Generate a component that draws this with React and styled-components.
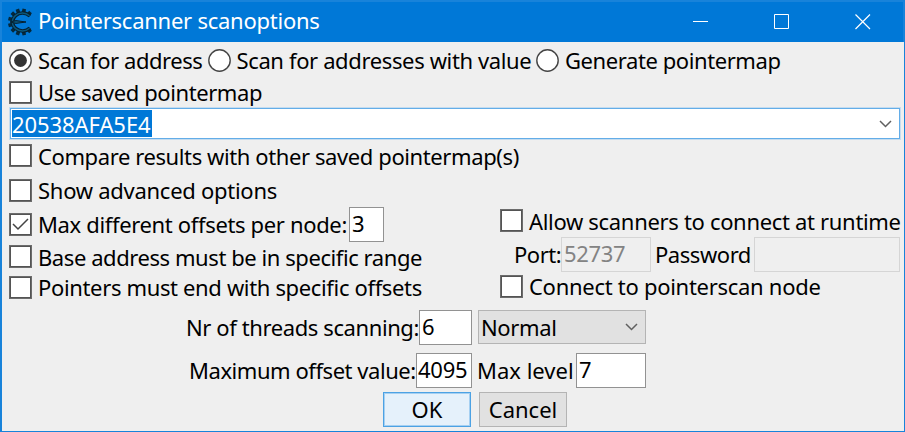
import React from "react";
import styled, { createGlobalStyle } from "styled-components";

const GlobalStyle = createGlobalStyle`
  * { box-sizing: border-box; }
  body { margin: 0; overflow: hidden; }
`;

const Window = styled.div`
  width: 905px;
  height: 432px;
  display: flex;
  flex-direction: column;
  border: solid #1883da;
  border-width: 2px 1px 1px 2px;
  background: #efefef;
  color: #000;
  font: 22px/23px "Noto Sans", sans-serif;
  white-space: nowrap;
`;

const TitleBar = styled.header`
  height: 40px;
  flex: none;
  display: flex;
  align-items: center;
  padding-left: 4px;
  background: #0078d7;
  border-right: 1px solid #1883da;
  color: #fff;
`;

const Title = styled.h1`
  flex: 1;
  margin: 0 0 0 4px;
  padding-bottom: 3px;
  font-size: 22px;
  font-weight: 400;
  letter-spacing: -0.25px;
`;

const CaptionButton = styled.button`
  width: 81px;
  height: 40px;
  padding: 0;
  border: 0;
  background: none;
  display: grid;
  place-items: center;
`;

const Client = styled.main`
  flex: 1;
  padding: 7px 0 0 7px;
`;

const Row = styled.div`
  display: flex;
  height: ${(p) => p.$h || 23}px;
  margin-top: ${(p) => p.$top || 0}px;
  margin-left: ${(p) => p.$left || 0}px;
`;

const Text = styled.span`
  width: ${(p) => (p.$w ? `${p.$w}px` : "auto")};
  flex: none;
  margin-top: ${(p) => p.$top || 0}px;
  padding-left: ${(p) => p.$pl || 0}px;
  letter-spacing: ${(p) => p.$ls || 0}px;
`;

const Option = styled.label`
  display: flex;
  height: 23px;
  width: ${(p) => (p.$w ? `${p.$w}px` : "auto")};
  margin-top: ${(p) => p.$top || 0}px;
  flex: none;
`;

const Box = styled.span`
  width: 23px;
  height: 23px;
  flex: none;
  margin-right: 6px;
  border: 1px solid #6c6c6c;
  box-shadow: inset 0 0 0 1px #545454;
  background: #fff;
  display: grid;
  place-items: center;
`;

const RadioMark = styled.svg`
  width: 24px;
  height: 24px;
  flex: none;
  margin-right: 5px;
`;

const Combo = styled.div`
  width: 892px;
  height: 33px;
  margin-top: 3px;
  padding: 2px 8px 2px 2px;
  display: flex;
  justify-content: space-between;
  align-items: center;
  background: #fff;
  border: 1px solid #c5dcef;
  box-shadow: inset 0 0 0 1px #63ade8;
`;

const Selection = styled.span`
  height: 27px;
  width: 140px;
  background: #0078d7;
  color: #fff;
  line-height: 28px;
  letter-spacing: -0.08px;
`;

const Columns = styled.div`
  display: grid;
  grid-template-columns: 491px 411px;
  margin-top: 5px;
`;

const Field = styled.span`
  width: ${(p) => p.$w}px;
  height: 35px;
  flex: none;
  padding: 4px 0 0 ${(p) => p.$pl ?? 2}px;
  border: 1px solid ${(p) => (p.$disabled ? "#d5d5d5" : "#929292")};
  background: ${(p) => (p.$disabled ? "#efefef" : "#fff")};
  color: ${(p) => (p.$disabled ? "#838383" : "#000")};
  letter-spacing: ${(p) => p.$ls || 0}px;
`;

const Select = styled.button`
  width: 168px;
  height: 34px;
  margin-left: 6px;
  padding: 0 7px 0 2px;
  display: flex;
  align-items: center;
  justify-content: space-between;
  border: 1px solid #b4b4b4;
  background: #e1e1e1;
  color: inherit;
  font: inherit;
  letter-spacing: -0.35px;
`;

const Button = styled.button`
  width: ${(p) => p.$w}px;
  height: 35px;
  padding: 0;
  border: ${(p) => (p.$primary ? "1px solid #4ca2e4" : "1px solid #b4b4b4")};
  box-shadow: ${(p) => (p.$primary ? "inset 0 0 0 1px #a5d0f2" : "none")};
  background: ${(p) => (p.$primary ? "#e5f1fb" : "#e1e1e1")};
  color: inherit;
  font: inherit;
`;

const Actions = styled.footer`
  display: flex;
  gap: 8px;
  margin: 4px 0 0 374px;
`;

const Chevron = () => (
  <svg width="13" height="8" viewBox="0 0 13 8" fill="none" stroke="#606060" strokeWidth="1.5">
    <path d="M1 1 L6.5 6.5 L12 1" />
  </svg>
);

const teeth = [48, 78, 108, 136, 165, 195, 224, 252, 282, 312];

const GearLogo = () => (
  <svg width="28" height="28" viewBox="0 0 28 28" fill="none">
    {teeth.map((a) => (
      <path key={a} d="M24 12.2 H29 V15.8 H24 Z" fill="#05283b" transform={`rotate(${a} 15.5 14)`} />
    ))}
    <path d="M24 8 A10 9 0 1 0 24 20" stroke="#05202f" strokeWidth="3.6" />
    <path d="M23.5 7.7 A10 9 0 1 0 23.5 20.3" stroke="#0b587d" strokeWidth="1.4" />
    <path d="M4 14 L10 12.6 L20 14 L10 15.4 Z" fill="#0b587d" stroke="#05202f" />
  </svg>
);

const Radio = ({ checked, w, ls, children }) => (
  <Option $w={w}>
    <RadioMark viewBox="0 0 24 24">
      <circle cx="11.5" cy="11.5" r="10.7" fill="#fff" stroke="#444" strokeWidth="1.4" />
      {checked && <circle cx="11.5" cy="11.5" r="6.4" fill="#333" />}
    </RadioMark>
    <Text $ls={ls}>{children}</Text>
  </Option>
);

const Check = ({ checked, top, w, ls, textTop, children }) => (
  <Option $top={top} $w={w}>
    <Box>
      {checked && (
        <svg width="17" height="13" viewBox="0 0 17 13" fill="none" stroke="#444" strokeWidth="1.5">
          <path d="M1 6 L6 11 L16 1" />
        </svg>
      )}
    </Box>
    <Text $ls={ls} $top={textTop}>{children}</Text>
  </Option>
);

export default function App() {
  return (
    <>
      <GlobalStyle />
      <Window>
        <TitleBar>
          <GearLogo />
          <Title>Pointerscanner scanoptions</Title>
          <CaptionButton aria-label="Minimize">
            <svg width="16" height="16" stroke="#fff"><path d="M0 7.5H15" /></svg>
          </CaptionButton>
          <CaptionButton aria-label="Maximize">
            <svg width="16" height="16" stroke="#fff" fill="none"><path d="M.5 .5H14.5V14.5H.5Z" /></svg>
          </CaptionButton>
          <CaptionButton aria-label="Close">
            <svg width="16" height="16" stroke="#fff" strokeWidth="1.2"><path d="M.5 .5L15 15M15 .5L.5 15" /></svg>
          </CaptionButton>
        </TitleBar>
        <Client>
          <Row>
            <Radio checked w={198.5} ls={-0.44}>Scan for address</Radio>
            <Radio w={328.5} ls={-0.37}>Scan for addresses with value</Radio>
            <Radio ls={-0.42}>Generate pointermap</Radio>
          </Row>
          <Check top={9} ls={-0.42}>Use saved pointermap</Check>
          <Combo>
            <Selection>20538AFA5E4</Selection>
            <Chevron />
          </Combo>
          <Check top={4} textTop={1} ls={-0.4}>Compare results with other saved pointermap(s)</Check>
          <Check top={12} ls={-0.27}>Show advanced options</Check>
          <Columns>
            <div>
              <Row $h={35}>
                <Check checked top={6} w={340} ls={-0.35}>Max different offsets per node:</Check>
                <Field $w={35}>3</Field>
              </Row>
              <Check top={3} textTop={1} ls={-0.43}>Base address must be in specific range</Check>
              <Check top={8} textTop={0} ls={-0.35}>Pointers must end with specific offsets</Check>
            </div>
            <div>
              <Check top={2} textTop={1} ls={-0.32}>Allow scanners to connect at runtime</Check>
              <Row $h={35} $top={5} $left={14}>
                <Text $w={47} $top={6} $ls={-0.45}>Port:</Text>
                <Field $w={90} $disabled $ls={-0.33}>52737</Field>
                <Text $w={103} $top={6} $pl={4} $ls={-0.45}>Password</Text>
                <Field $w={146} $disabled />
              </Row>
              <Check top={3} textTop={0} ls={-0.28}>Connect to pointerscan node</Check>
            </div>
          </Columns>
          <Row $h={34} $top={11} $left={177}>
            <Text $w={233} $top={6} $ls={-0.4}>Nr of threads scanning:</Text>
            <Field $w={53}>6</Field>
            <Select>Normal<Chevron /></Select>
          </Row>
          <Row $h={35} $top={9} $left={180}>
            <Text $w={227} $top={6} $ls={-0.45}>Maximum offset value:</Text>
            <Field $w={56} $pl={1} $ls={-0.25}>4095</Field>
            <Text $w={104} $top={6} $pl={5}>Max level</Text>
            <Field $w={70}>7</Field>
          </Row>
          <Actions>
            <Button $w={88} $primary>OK</Button>
            <Button $w={88}>Cancel</Button>
          </Actions>
        </Client>
      </Window>
    </>
  );
}
